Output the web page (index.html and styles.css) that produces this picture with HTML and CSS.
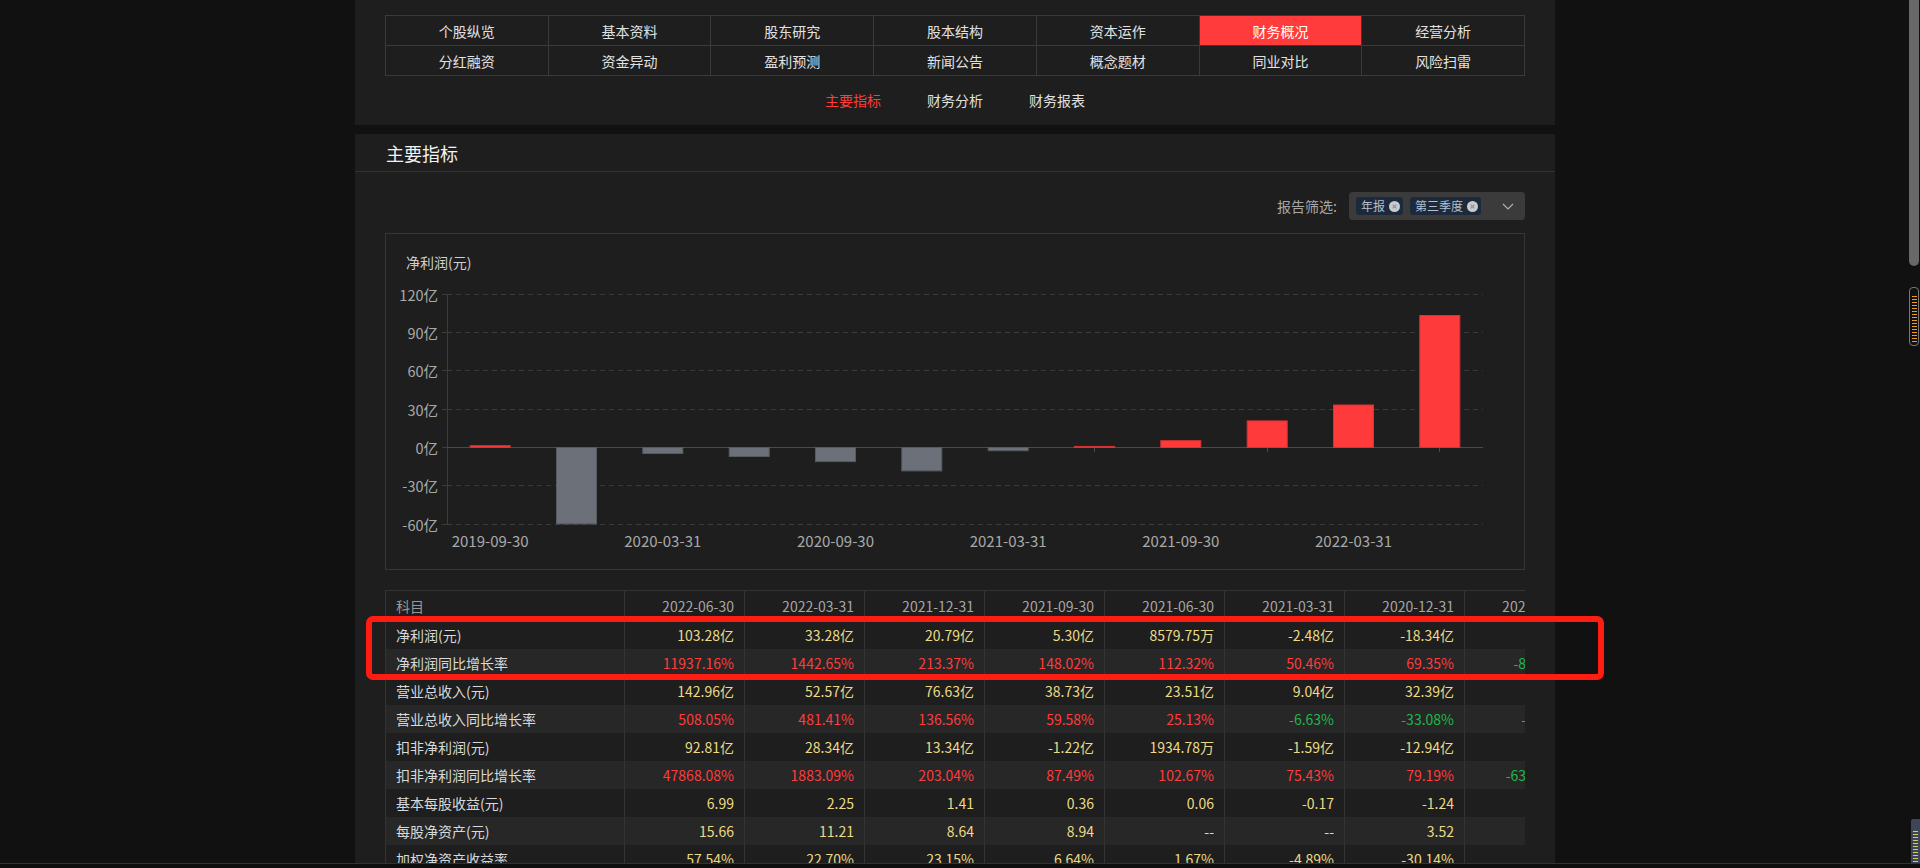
FILE: index.html
```html
<!DOCTYPE html>
<html lang="zh-CN">
<head>
<meta charset="utf-8">
<title>财务概况 - 主要指标</title>
<link rel="stylesheet" href="styles.css">
</head>
<body>
<div class="page">
  <section class="panel top-panel">
    <nav class="nav">
      <div class="nav-item">个股纵览</div>
      <div class="nav-item">基本资料</div>
      <div class="nav-item">股东研究</div>
      <div class="nav-item">股本结构</div>
      <div class="nav-item">资本运作</div>
      <div class="nav-item active">财务概况</div>
      <div class="nav-item">经营分析</div>
      <div class="nav-item">分红融资</div>
      <div class="nav-item">资金异动</div>
      <div class="nav-item">盈利预测</div>
      <div class="nav-item">新闻公告</div>
      <div class="nav-item">概念题材</div>
      <div class="nav-item">同业对比</div>
      <div class="nav-item">风险扫雷</div>
    </nav>
    <div class="subtabs">
      <span class="subtab active">主要指标</span>
      <span class="subtab">财务分析</span>
      <span class="subtab">财务报表</span>
    </div>
  </section>

  <section class="panel main-panel">
    <div class="panel-head">主要指标</div>
    <div class="panel-body">
      <div class="filter-row">
        <span class="filter-label">报告筛选:</span>
        <div class="filter-box">
          <span class="tag">年报<span class="tag-close"><svg viewBox="0 0 10 10" width="11" height="11"><path d="M3.3 3.3 L6.7 6.7 M6.7 3.3 L3.3 6.7" stroke="#8a8f98" stroke-width="1" fill="none"/></svg></span></span>
          <span class="tag">第三季度<span class="tag-close"><svg viewBox="0 0 10 10" width="11" height="11"><path d="M3.3 3.3 L6.7 6.7 M6.7 3.3 L3.3 6.7" stroke="#8a8f98" stroke-width="1" fill="none"/></svg></span></span>
          <svg class="chevron" viewBox="0 0 12 7" width="12" height="7"><path d="M1 1 L6 6 L11 1" stroke="#b0b0b0" stroke-width="1.2" fill="none"/></svg>
        </div>
      </div>

      <div class="chart-box">
        <svg class="chart" viewBox="0 0 1138 335" width="1138" height="335">
          <text class="chart-title" x="20" y="28">净利润(元)</text>
          <g class="grid" shape-rendering="crispEdges">
            <line x1="61" x2="1097" y1="60.5" y2="60.5"/>
            <line x1="61" x2="1097" y1="98.5" y2="98.5"/>
            <line x1="61" x2="1097" y1="136.5" y2="136.5"/>
            <line x1="61" x2="1097" y1="175.5" y2="175.5"/>
            <line x1="61" x2="1097" y1="251.5" y2="251.5"/>
            <line x1="61" x2="1097" y1="290.5" y2="290.5"/>
          </g>
          <g class="yaxis" shape-rendering="crispEdges">
            <line x1="61.5" x2="61.5" y1="60" y2="291"/>
            <line x1="56" x2="61" y1="60.5" y2="60.5"/>
            <line x1="56" x2="61" y1="98.5" y2="98.5"/>
            <line x1="56" x2="61" y1="136.5" y2="136.5"/>
            <line x1="56" x2="61" y1="175.5" y2="175.5"/>
            <line x1="56" x2="61" y1="213.5" y2="213.5"/>
            <line x1="56" x2="61" y1="251.5" y2="251.5"/>
            <line x1="56" x2="61" y1="290.5" y2="290.5"/>
          </g>
          <g class="ylabels">
            <text x="52" y="60.5">120亿</text>
            <text x="52" y="98.5">90亿</text>
            <text x="52" y="136.5">60亿</text>
            <text x="52" y="175.5">30亿</text>
            <text x="52" y="213.5">0亿</text>
            <text x="52" y="251.5">-30亿</text>
            <text x="52" y="290.5">-60亿</text>
          </g>
          <g class="ticks" shape-rendering="crispEdges">
            <line x1="190.5" x2="190.5" y1="214" y2="218"/>
            <line x1="363.5" x2="363.5" y1="214" y2="218"/>
            <line x1="535.5" x2="535.5" y1="214" y2="218"/>
            <line x1="708.5" x2="708.5" y1="214" y2="218"/>
            <line x1="881.5" x2="881.5" y1="214" y2="218"/>
            <line x1="1053.5" x2="1053.5" y1="214" y2="218"/>
          </g>
          <line class="zero" x1="61" x2="1097" y1="213.5" y2="213.5" shape-rendering="crispEdges"/>
          <g class="bars-neg">
            <rect x="170.5" y="213.5" width="40" height="76.4"/>
            <rect x="256.8" y="213.5" width="40" height="6.0"/>
            <rect x="343.2" y="213.5" width="40" height="9.0"/>
            <rect x="429.5" y="213.5" width="40" height="14.1"/>
            <rect x="515.8" y="213.5" width="40" height="23.4"/>
            <rect x="602.2" y="213.5" width="40" height="3.2"/>
          </g>
          <g class="bars-pos">
            <rect x="84.2" y="211.7" width="40" height="1.8"/>
            <rect x="688.5" y="212.4" width="40" height="1.1"/>
            <rect x="774.8" y="206.7" width="40" height="6.8"/>
            <rect x="861.2" y="186.9" width="40" height="26.6"/>
            <rect x="947.5" y="171.0" width="40" height="42.5"/>
            <rect x="1033.8" y="81.5" width="40" height="132"/>
          </g>
          <g class="xlabels">
            <text x="104.2" y="306">2019-09-30</text>
            <text x="276.8" y="306">2020-03-31</text>
            <text x="449.5" y="306">2020-09-30</text>
            <text x="622.2" y="306">2021-03-31</text>
            <text x="794.8" y="306">2021-09-30</text>
            <text x="967.5" y="306">2022-03-31</text>
          </g>
        </svg>
      </div>

      <div class="table-wrap">
        <table class="data-table">
          <colgroup>
            <col class="c-name">
            <col class="c-val"><col class="c-val"><col class="c-val"><col class="c-val">
            <col class="c-val"><col class="c-val"><col class="c-val"><col class="c-val">
          </colgroup>
          <thead>
            <tr>
              <th class="name">科目</th>
              <th>2022-06-30</th><th>2022-03-31</th><th>2021-12-31</th><th>2021-09-30</th>
              <th>2021-06-30</th><th>2021-03-31</th><th>2020-12-31</th><th>2020-09-30</th>
            </tr>
          </thead>
          <tbody>
            <tr>
              <td class="name">净利润(元)</td>
              <td class="y">103.28亿</td><td class="y">33.28亿</td><td class="y">20.79亿</td><td class="y">5.30亿</td>
              <td class="y">8579.75万</td><td class="y">-2.48亿</td><td class="y">-18.34亿</td><td class="y">-9.87亿</td>
            </tr>
            <tr>
              <td class="name">净利润同比增长率</td>
              <td class="r">11937.16%</td><td class="r">1442.65%</td><td class="r">213.37%</td><td class="r">148.02%</td>
              <td class="r">112.32%</td><td class="r">50.46%</td><td class="r">69.35%</td><td class="g">-859.02%</td>
            </tr>
            <tr>
              <td class="name">营业总收入(元)</td>
              <td class="y">142.96亿</td><td class="y">52.57亿</td><td class="y">76.63亿</td><td class="y">38.73亿</td>
              <td class="y">23.51亿</td><td class="y">9.04亿</td><td class="y">32.39亿</td><td class="y">17.38亿</td>
            </tr>
            <tr>
              <td class="name">营业总收入同比增长率</td>
              <td class="r">508.05%</td><td class="r">481.41%</td><td class="r">136.56%</td><td class="r">59.58%</td>
              <td class="r">25.13%</td><td class="g">-6.63%</td><td class="g">-33.08%</td><td class="g">-30.92%</td>
            </tr>
            <tr>
              <td class="name">扣非净利润(元)</td>
              <td class="y">92.81亿</td><td class="y">28.34亿</td><td class="y">13.34亿</td><td class="y">-1.22亿</td>
              <td class="y">1934.78万</td><td class="y">-1.59亿</td><td class="y">-12.94亿</td><td class="y">-9.66亿</td>
            </tr>
            <tr>
              <td class="name">扣非净利润同比增长率</td>
              <td class="r">47868.08%</td><td class="r">1883.09%</td><td class="r">203.04%</td><td class="r">87.49%</td>
              <td class="r">102.67%</td><td class="r">75.43%</td><td class="r">79.19%</td><td class="g">-6354.25%</td>
            </tr>
            <tr>
              <td class="name">基本每股收益(元)</td>
              <td class="y">6.99</td><td class="y">2.25</td><td class="y">1.41</td><td class="y">0.36</td>
              <td class="y">0.06</td><td class="y">-0.17</td><td class="y">-1.24</td><td class="y">-0.87</td>
            </tr>
            <tr>
              <td class="name">每股净资产(元)</td>
              <td class="y">15.66</td><td class="y">11.21</td><td class="y">8.64</td><td class="y">8.94</td>
              <td class="y">--</td><td class="y">--</td><td class="y">3.52</td><td class="y">3.11</td>
            </tr>
            <tr>
              <td class="name">加权净资产收益率</td>
              <td class="y">57.54%</td><td class="y">22.70%</td><td class="y">23.15%</td><td class="y">6.64%</td>
              <td class="y">1.67%</td><td class="y">-4.89%</td><td class="y">-30.14%</td><td class="y">-7.20%</td>
            </tr>
            <tr>
              <td class="name">摊薄净资产收益率</td>
              <td class="y">52.08%</td><td class="y">20.41%</td><td class="y">21.37%</td><td class="y">6.05%</td>
              <td class="y">1.59%</td><td class="y">-5.12%</td><td class="y">-28.73%</td><td class="y">-6.94%</td>
            </tr>
          </tbody>
        </table>
      </div>
    </div>
  </section>
</div>

<div class="annot"></div>
<div class="scroll-thumb"></div>
<div class="mini-map"></div>
<div class="mini-bottom"></div>
<div class="bottom-line"></div>
</body>
</html>
```

FILE: styles.css
```css
* {
  box-sizing: border-box;
  margin: 0;
  padding: 0;
}

html,
body {
  height: 100%;
  overflow: hidden;
}

body {
  background: #111111;
  font-family: "Noto Sans CJK SC", "Microsoft YaHei", sans-serif;
  font-size: 13px;
  color: #dddddd;
}

.page {
  width: calc(100% - 10px);
  display: flex;
  flex-direction: column;
  align-items: center;
}

.panel {
  width: 1200px;
  background: #1e1e1e;
}

/* ---------- top navigation panel ---------- */
.top-panel {
  height: 125px;
  padding: 15px 30px 0;
}

.nav {
  display: grid;
  grid-template-columns: repeat(7, 1fr);
  gap: 1px;
  background: #3a3a3a;
  border: 1px solid #3a3a3a;
}

.nav-item {
  height: 29px;
  background: #1e1e1e;
  display: flex;
  align-items: center;
  justify-content: center;
  font-size: 14px;
  color: #e2e2e2;
}

.nav-item.active {
  background: #ff3b3b;
  color: #ffffff;
}

.subtabs {
  display: flex;
  justify-content: center;
  gap: 46px;
  margin-top: 14px;
  line-height: 20px;
  font-size: 14px;
}

.subtab {
  color: #e0e0e0;
}

.subtab.active {
  color: #ff3b3b;
}

/* ---------- main panel ---------- */
.main-panel {
  margin-top: 9px;
  height: 900px;
}

.panel-head {
  height: 38px;
  border-bottom: 1px solid #333333;
  padding-left: 31px;
  display: flex;
  align-items: center;
  font-size: 18px;
  color: #f2f2f2;
}

.panel-body {
  padding: 0 30px;
}

.filter-row {
  display: flex;
  justify-content: flex-end;
  align-items: center;
  gap: 12px;
  margin-top: 20px;
  height: 28px;
}

.filter-label {
  font-size: 14px;
  color: #a8a8a8;
}

.filter-box {
  width: 176px;
  height: 28px;
  background: #3b3b3b;
  border-radius: 4px;
  display: flex;
  align-items: center;
  gap: 7px;
  padding: 0 5px 0 7px;
}

.tag {
  height: 18px;
  display: flex;
  align-items: center;
  gap: 4px;
  padding: 0 3px 0 5px;
  background: #1c2a3c;
  border-radius: 3px;
  font-size: 12px;
  color: #b3bfce;
  line-height: 18px;
}

.tag-close {
  width: 11px;
  height: 11px;
  border-radius: 50%;
  background: #c9cbcf;
  display: flex;
}

.chevron {
  margin-left: auto;
  margin-right: 6px;
}

/* ---------- chart ---------- */
.chart-box {
  margin-top: 13px;
  height: 337px;
  border: 1px solid #363636;
}

.chart {
  display: block;
  font-family: "Noto Sans CJK SC", "Microsoft YaHei", sans-serif;
}

.chart-title {
  font-size: 14px;
  fill: #cfcfcf;
  dominant-baseline: central;
}

.grid line {
  stroke: #3a3a3a;
  stroke-width: 1;
  stroke-dasharray: 5 4;
}

.yaxis line {
  stroke: #3c3c3c;
  stroke-width: 1;
}

.zero {
  stroke: #4a4a4a;
  stroke-width: 1;
}

.ticks line {
  stroke: #4a4a4a;
  stroke-width: 1;
}

.ylabels text {
  font-size: 14.5px;
  fill: #a9a9a9;
  text-anchor: end;
  dominant-baseline: central;
}

.xlabels text {
  font-size: 15px;
  fill: #a9a9a9;
  text-anchor: middle;
  dominant-baseline: central;
}

.bars-neg rect {
  fill: #6b7079;
  stroke: #565a61;
  stroke-width: 1;
}

.bars-pos rect {
  fill: #ff3a3a;
  stroke: #d93232;
  stroke-width: 1;
}

/* ---------- table ---------- */
.table-wrap {
  margin-top: 20px;
  width: 1140px;
  overflow: hidden;
}

.data-table {
  width: 1200px;
  table-layout: fixed;
  border-collapse: separate;
  border-spacing: 0;
  font-size: 14px;
}

.c-name {
  width: 240px;
}

.c-val {
  width: 120px;
}

.data-table th,
.data-table td {
  height: 28px;
  padding: 0 10px;
  border-right: 1px solid #333333;
  white-space: nowrap;
  text-align: right;
  font-weight: normal;
  line-height: 20px;
}

.data-table th {
  height: 31px;
  border-top: 1px solid #333333;
  color: #a6a6a6;
}

.data-table .name {
  text-align: left;
  border-left: 1px solid #333333;
  color: #d9d9d9;
}

.data-table th.name {
  color: #999999;
}

.data-table tbody tr:nth-child(even) {
  background: #272727;
}

.y {
  color: #ecdb85;
}

.r {
  color: #ff3c3c;
}

.g {
  color: #1fb84a;
}

/* ---------- overlays ---------- */
.annot {
  position: absolute;
  left: 366px;
  top: 616px;
  width: 1238px;
  height: 64px;
  border: 6px solid #ff1d13;
  border-radius: 7px;
}

.scroll-thumb {
  position: fixed;
  right: 1px;
  top: 0;
  width: 10px;
  height: 266px;
  background: #686868;
  border-radius: 0 0 5px 5px;
}

.mini-map {
  position: fixed;
  right: 1px;
  top: 287px;
  width: 10px;
  height: 59px;
  border: 1px solid #777777;
  border-radius: 4px;
  background:
    repeating-linear-gradient(to bottom, #f39a1e 0 1px, transparent 1px 3px) 2px 8px / 5px 47px no-repeat,
    #111111;
}

.mini-bottom {
  position: fixed;
  right: 0;
  bottom: 0;
  width: 9px;
  height: 49px;
  border-radius: 2px 0 0 0;
  background:
    repeating-linear-gradient(to bottom, #d9c86a 0 1px, transparent 1px 3px) 2px 12px / 5px 36px no-repeat,
    #3d4656;
}

.bottom-line {
  position: fixed;
  left: 0;
  right: 0;
  bottom: 0;
  height: 5px;
  border-top: 1px solid #323232;
  background: #0e0e0e;
}
```
